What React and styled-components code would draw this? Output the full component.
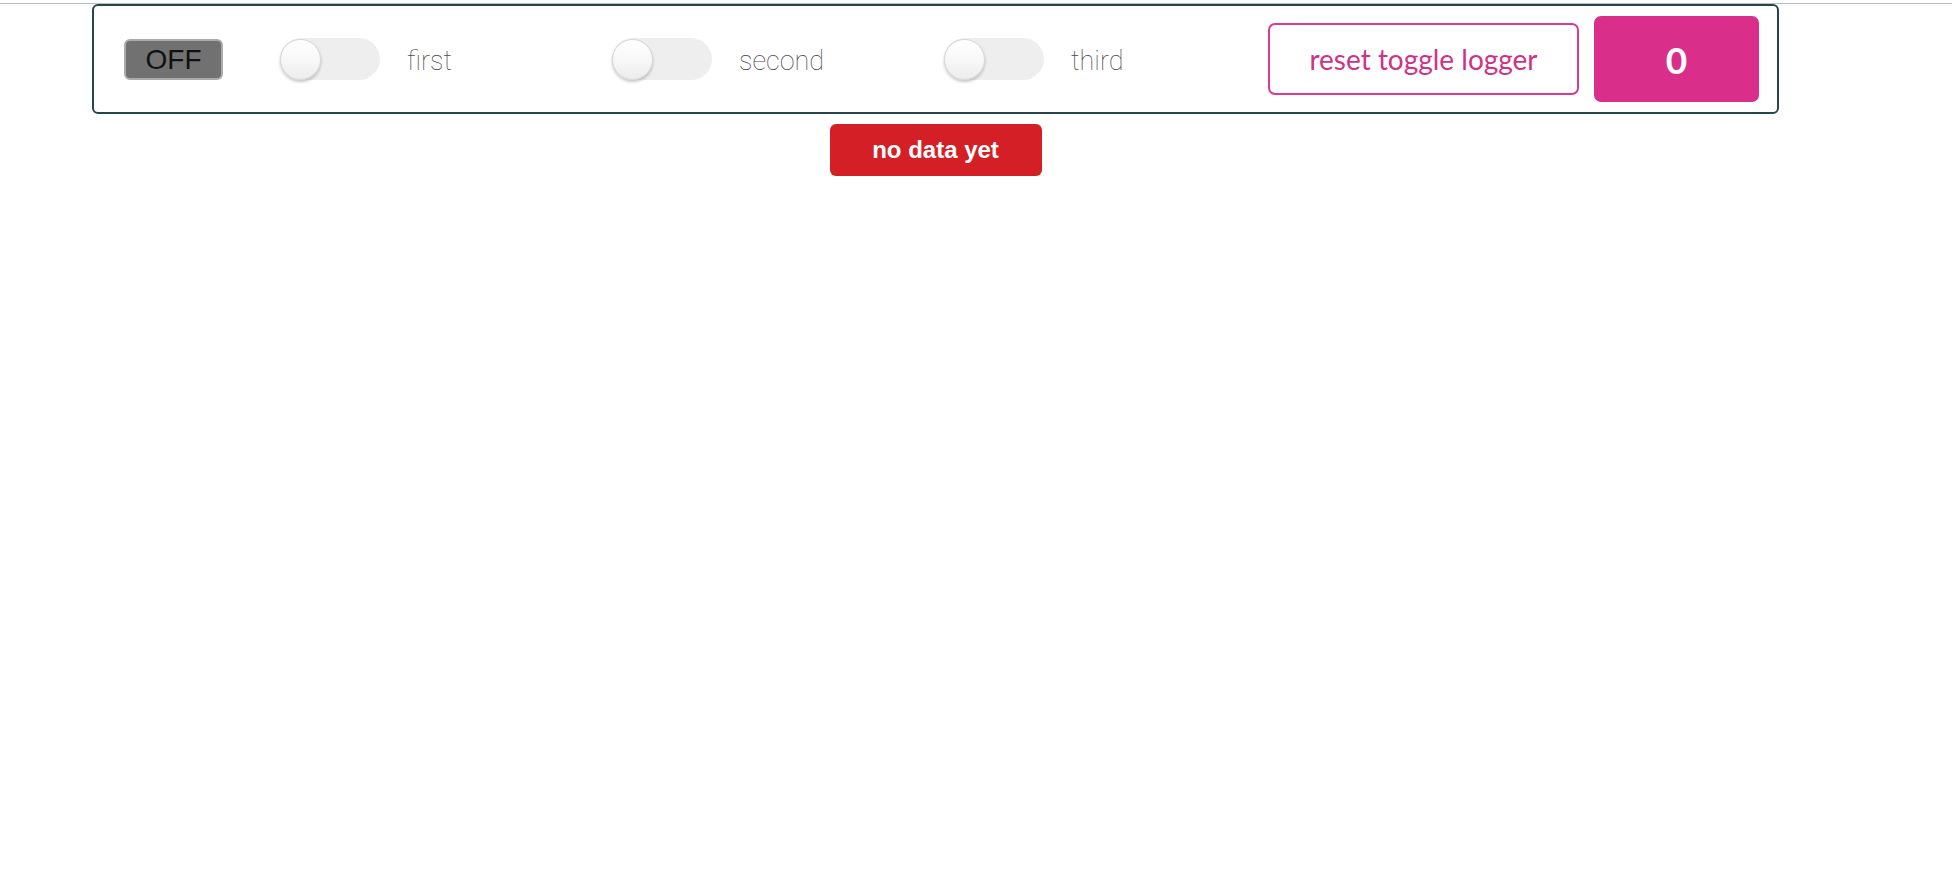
import { useState, useCallback } from "react";
import styled, { createGlobalStyle } from "styled-components";

const GlobalStyle = createGlobalStyle`
  html, body {
    margin: 0;
    padding: 0;
    background: #ffffff;
  }
  body {
    font-family: "Liberation Sans", Arial, sans-serif;
  }
`;

const TopRule = styled.div`
  margin-top: 3px;
  height: 1px;
  background: #bdbdbd;
`;

const Page = styled.div`
  width: 1687px;
  margin-left: 92px;
  display: flex;
  flex-direction: column;
  align-items: center;
`;

const Bar = styled.div`
  box-sizing: border-box;
  width: 100%;
  height: 110px;
  display: flex;
  align-items: center;
  padding: 0 18px 0 30px;
  border: 2px solid #27464a;
  border-radius: 6px;
`;

const PowerButton = styled.button`
  box-sizing: border-box;
  width: 99px;
  height: 41px;
  margin-right: 57px;
  padding: 0;
  background: #717171;
  border: 2px solid #ababab;
  border-radius: 6px;
  color: #111111;
  font-family: "Liberation Sans", Arial, sans-serif;
  font-size: 28px;
  line-height: 37px;
  cursor: pointer;
`;

const ToggleGroup = styled.label`
  display: flex;
  align-items: center;
  flex: 0 0 ${(p) => (p.$width ? `${p.$width}px` : "auto")};
  cursor: pointer;
`;

const Track = styled.span`
  box-sizing: border-box;
  width: 100px;
  height: 42px;
  display: flex;
  align-items: center;
  justify-content: ${(p) => (p.$on ? "flex-end" : "flex-start")};
  border-radius: 21px;
  background: ${(p) => (p.$on ? "#d1d1d1" : "#eeeeee")};
`;

const Knob = styled.span`
  box-sizing: border-box;
  width: 41px;
  height: 41px;
  border-radius: 50%;
  border: 1px solid #d6d6d6;
  background: linear-gradient(180deg, #ffffff 0%, #f6f6f6 60%, #ececec 100%);
  box-shadow: 0 2px 3px rgba(0, 0, 0, 0.22);
`;

const ToggleText = styled.span`
  margin: 3px 0 0 27px;
  font-family: Roboto, "Noto Sans", sans-serif;
  font-weight: 100;
  font-size: 27px;
  color: #4a4a4a;
`;

const ResetButton = styled.button`
  box-sizing: border-box;
  width: 311px;
  height: 72px;
  margin-left: auto;
  background: #ffffff;
  border: 2px solid #dd3a8f;
  border-radius: 7px;
  color: #cf3386;
  font-family: Lato, "Open Sans", sans-serif;
  font-size: 28px;
  cursor: pointer;
`;

const Counter = styled.div`
  width: 165px;
  height: 86px;
  margin-left: 15px;
  display: flex;
  align-items: center;
  justify-content: center;
  background: #d92e8a;
  border-radius: 7px;
  color: #ffffff;
  font-family: Lato, "Open Sans", sans-serif;
  font-weight: 700;
  font-size: 37px;
`;

const Notice = styled.div`
  box-sizing: border-box;
  width: 212px;
  height: 52px;
  margin-top: 10px;
  display: flex;
  align-items: center;
  justify-content: center;
  background: #d51f26;
  border-radius: 6px;
  color: #ffffff;
  font-family: "Liberation Sans", Arial, sans-serif;
  font-weight: 700;
  font-size: 24px;
`;

const toggles = [
  { id: "first", width: 332 },
  { id: "second", width: 332 },
  { id: "third" },
];

export default function App() {
  const [power, setPower] = useState(false);
  const [state, setState] = useState({ first: false, second: false, third: false });
  const [log, setLog] = useState([]);

  const handleToggle = useCallback(
    (id) => {
      if (!power) return;
      setState((s) => ({ ...s, [id]: !s[id] }));
      setLog((l) => [...l, id]);
    },
    [power]
  );

  const handleReset = useCallback(() => setLog([]), []);

  return (
    <>
      <GlobalStyle />
      <TopRule />
      <Page>
        <Bar>
          <PowerButton onClick={() => setPower((p) => !p)}>
            {power ? "ON" : "OFF"}
          </PowerButton>
          {toggles.map((t) => (
            <ToggleGroup key={t.id} $width={t.width} onClick={() => handleToggle(t.id)}>
              <Track $on={state[t.id]}>
                <Knob />
              </Track>
              <ToggleText>{t.id}</ToggleText>
            </ToggleGroup>
          ))}
          <ResetButton onClick={handleReset}>reset toggle logger</ResetButton>
          <Counter>{log.length}</Counter>
        </Bar>
        <Notice>{log.length ? log.join(", ") : "no data yet"}</Notice>
      </Page>
    </>
  );
}
